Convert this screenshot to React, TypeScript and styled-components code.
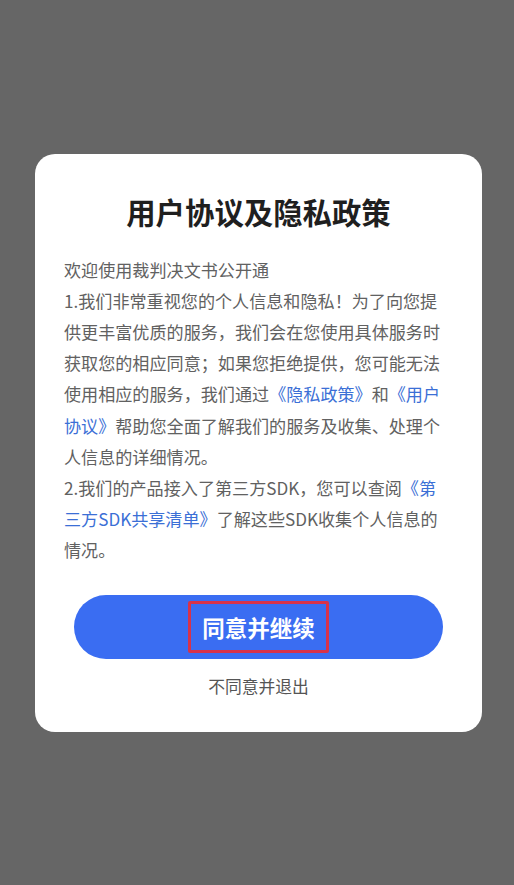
import styled, { createGlobalStyle } from 'styled-components';

const GlobalStyle = createGlobalStyle`
  html, body {
    margin: 0;
    padding: 0;
    background: #666666;
    font-family: "Noto Sans CJK SC", "Noto Sans", sans-serif;
  }
`;

const Overlay = styled.div`
  width: 514px;
  height: 885px;
  display: flex;
  align-items: center;
  justify-content: center;
  background: #666666;
`;

const Dialog = styled.div`
  width: 447px;
  box-sizing: border-box;
  margin-left: 3px;
  margin-top: 1px;
  background: #ffffff;
  border-radius: 20px;
  padding: 37px 29px 34px 29px;
  display: flex;
  flex-direction: column;
`;

const Title = styled.h1`
  margin: 0;
  font-size: 29.4px;
  line-height: 40px;
  font-weight: 700;
  color: #1f1f1f;
  text-align: center;
`;

const Body = styled.div`
  margin-top: 23px;
  font-size: 17.1px;
  line-height: 31.1px;
  color: #616161;
`;

const Para = styled.p`
  margin: 0;
`;

const Link = styled.span`
  color: #3b6fd6;
`;

const PrimaryButton = styled.button`
  margin: 30px 10px 0 10px;
  height: 64px;
  border: none;
  border-radius: 32px;
  background: #3a6df2;
  display: flex;
  align-items: center;
  justify-content: center;
  cursor: pointer;
  font-family: inherit;
`;

const Highlight = styled.span`
  box-sizing: border-box;
  height: 52px;
  padding: 0 11px;
  border: 3px solid #d8324a;
  border-radius: 2px;
  display: inline-flex;
  align-items: center;
  color: #ffffff;
  font-size: 22.5px;
  font-weight: 700;
`;

const SecondaryAction = styled.div`
  margin-top: 15px;
  text-align: center;
  font-size: 16.8px;
  line-height: 24px;
  color: #555555;
`;

export default function App() {
  return (
    <>
      <GlobalStyle />
      <Overlay>
        <Dialog>
          <Title>用户协议及隐私政策</Title>
          <Body>
            <Para>欢迎使用裁判决文书公开通</Para>
            <Para>
              1.我们非常重视您的个人信息和隐私！为了向您提供更丰富优质的服务，我们会在您使用具体服务时获取您的相应同意；如果您拒绝提供，您可能无法使用相应的服务，我们通过
              <Link>《隐私政策》</Link>和<Link>《用户协议》</Link>
              帮助您全面了解我们的服务及收集、处理个人信息的详细情况。
            </Para>
            <Para>
              2.我们的产品接入了第三方SDK，您可以查阅<Link>《第三方SDK共享清单》</Link>
              了解这些SDK收集个人信息的情况。
            </Para>
          </Body>
          <PrimaryButton>
            <Highlight>同意并继续</Highlight>
          </PrimaryButton>
          <SecondaryAction>不同意并退出</SecondaryAction>
        </Dialog>
      </Overlay>
    </>
  );
}
